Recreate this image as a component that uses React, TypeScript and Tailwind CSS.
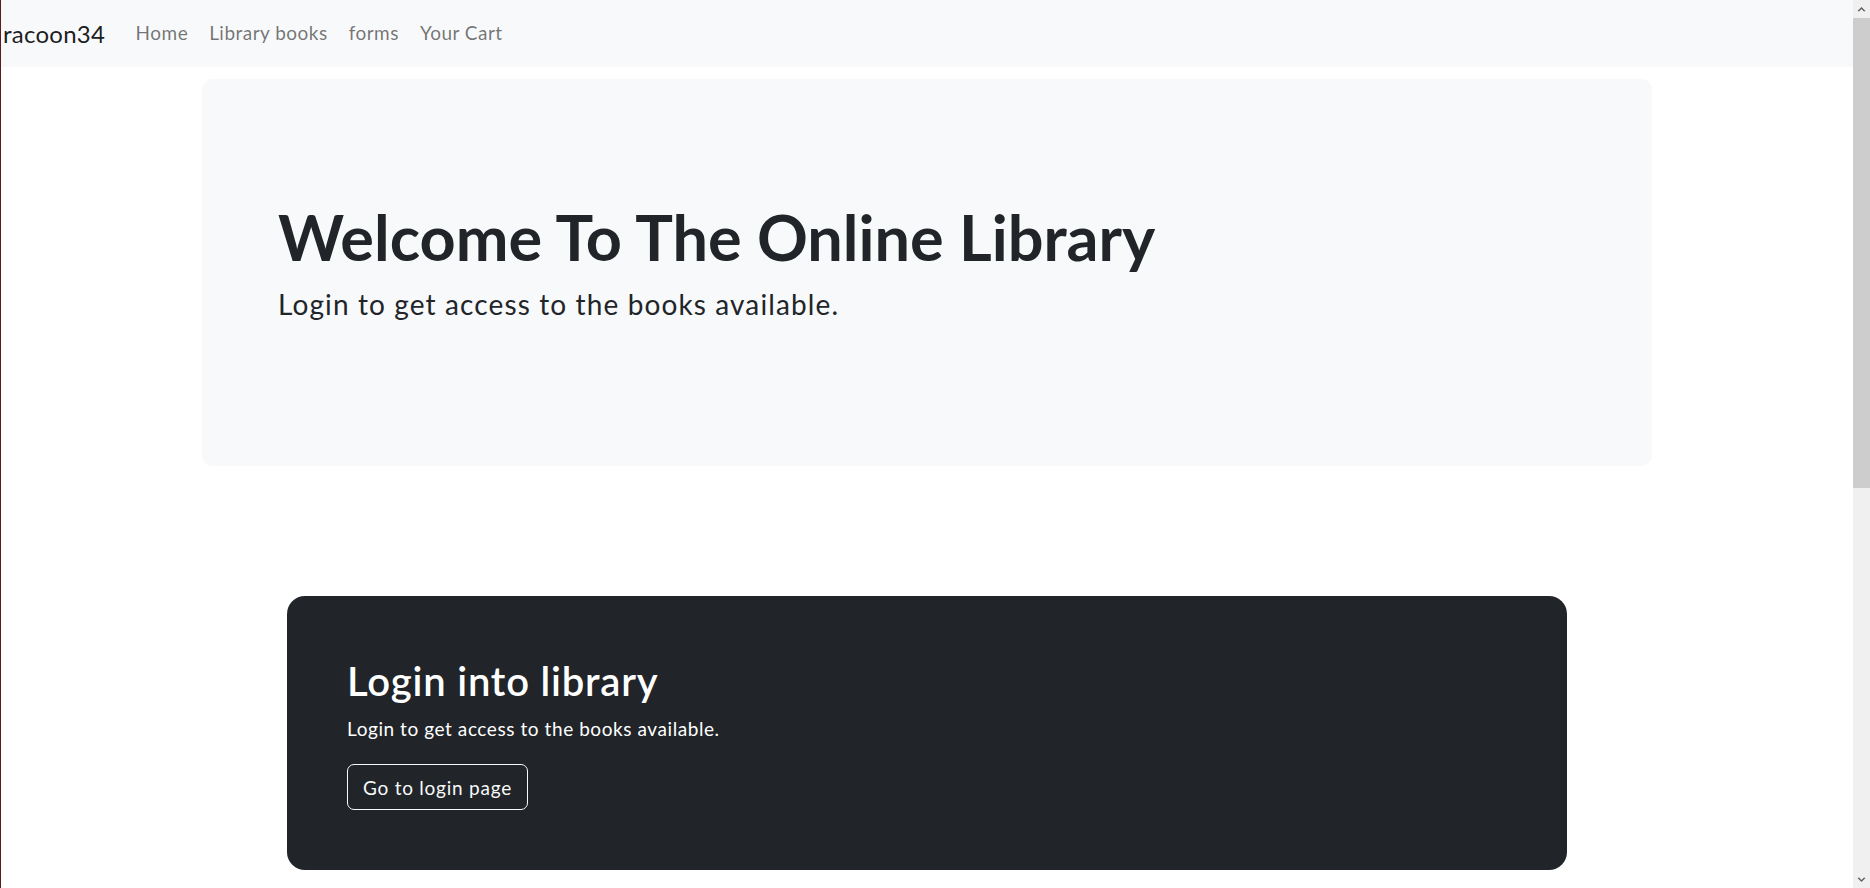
import React from 'react';

const navLinks = ['Home', 'Library books', 'forms', 'Your Cart'];

const ScrollArrow = ({ up }: { up?: boolean }) => (
  <div className="flex h-[17px] items-center justify-center">
    <svg width="9" height="6" viewBox="0 0 9 6" className={up ? '' : 'rotate-180'}>
      <path d="M0.5 5 L4.5 1 L8.5 5 L7 5.5 L4.5 3 L2 5.5 Z" fill="#5f5f5f" />
    </svg>
  </div>
);

const Scrollbar = () => (
  <div className="flex h-full w-[17px] shrink-0 flex-col bg-[#f0f0f0]">
    <ScrollArrow up />
    <div className="mt-[1px] h-[470px] bg-[#cdcdcd]" />
    <div className="flex-1" />
    <ScrollArrow />
  </div>
);

export default function App() {
  return (
    <div className="flex h-[888px] w-full overflow-hidden bg-white font-['Lato','Liberation_Sans',sans-serif] text-[#212529]">
      <div className="min-w-0 flex-1 border-l border-[#5e1b1b]">
        {/* Navbar */}
        <nav className="flex h-[67px] items-center bg-[#f8f9fa] pl-[2px]">
          <span className="mr-[20px] text-[24px] tracking-[0.01em] text-[rgba(0,0,0,0.9)]">racoon34</span>
          <ul className="flex">
            {navLinks.map((l) => (
              <li key={l} className="px-[10.5px] text-[19px] tracking-[0.025em] text-[rgba(0,0,0,0.55)]">
                {l}
              </li>
            ))}
          </ul>
        </nav>

        {/* Jumbotron */}
        <section className="mx-auto mt-[12px] h-[387px] w-[1450px] rounded-[11px] bg-[#f8f9fa] pl-[76px] pt-[120px]">
          <h1 className="text-[63px] font-bold leading-[1.2]">Welcome To The Online Library</h1>
          <p className="mt-[8px] text-[28px] leading-[1.5] tracking-[0.04em]">Login to get access to the books available.</p>
        </section>

        {/* Login card */}
        <section className="mx-auto mt-[130px] w-[1280px] rounded-[18px] bg-[#212529] px-[60px] pb-[60px] pt-[61px] text-white">
          <h2 className="text-[40px] font-semibold leading-[1.2] tracking-[0.02em]">Login into library</h2>
          <p className="mt-[10px] text-[19px] leading-[1.5] tracking-[0.03em]">Login to get access to the books available.</p>
          <button className="mt-[20px] h-[46px] rounded-[7px] border border-[#f8f9fa] px-[15px] pt-[3px] text-[19px] tracking-[0.04em] text-[#f8f9fa]">
            Go to login page
          </button>
        </section>
      </div>
      <Scrollbar />
    </div>
  );
}
